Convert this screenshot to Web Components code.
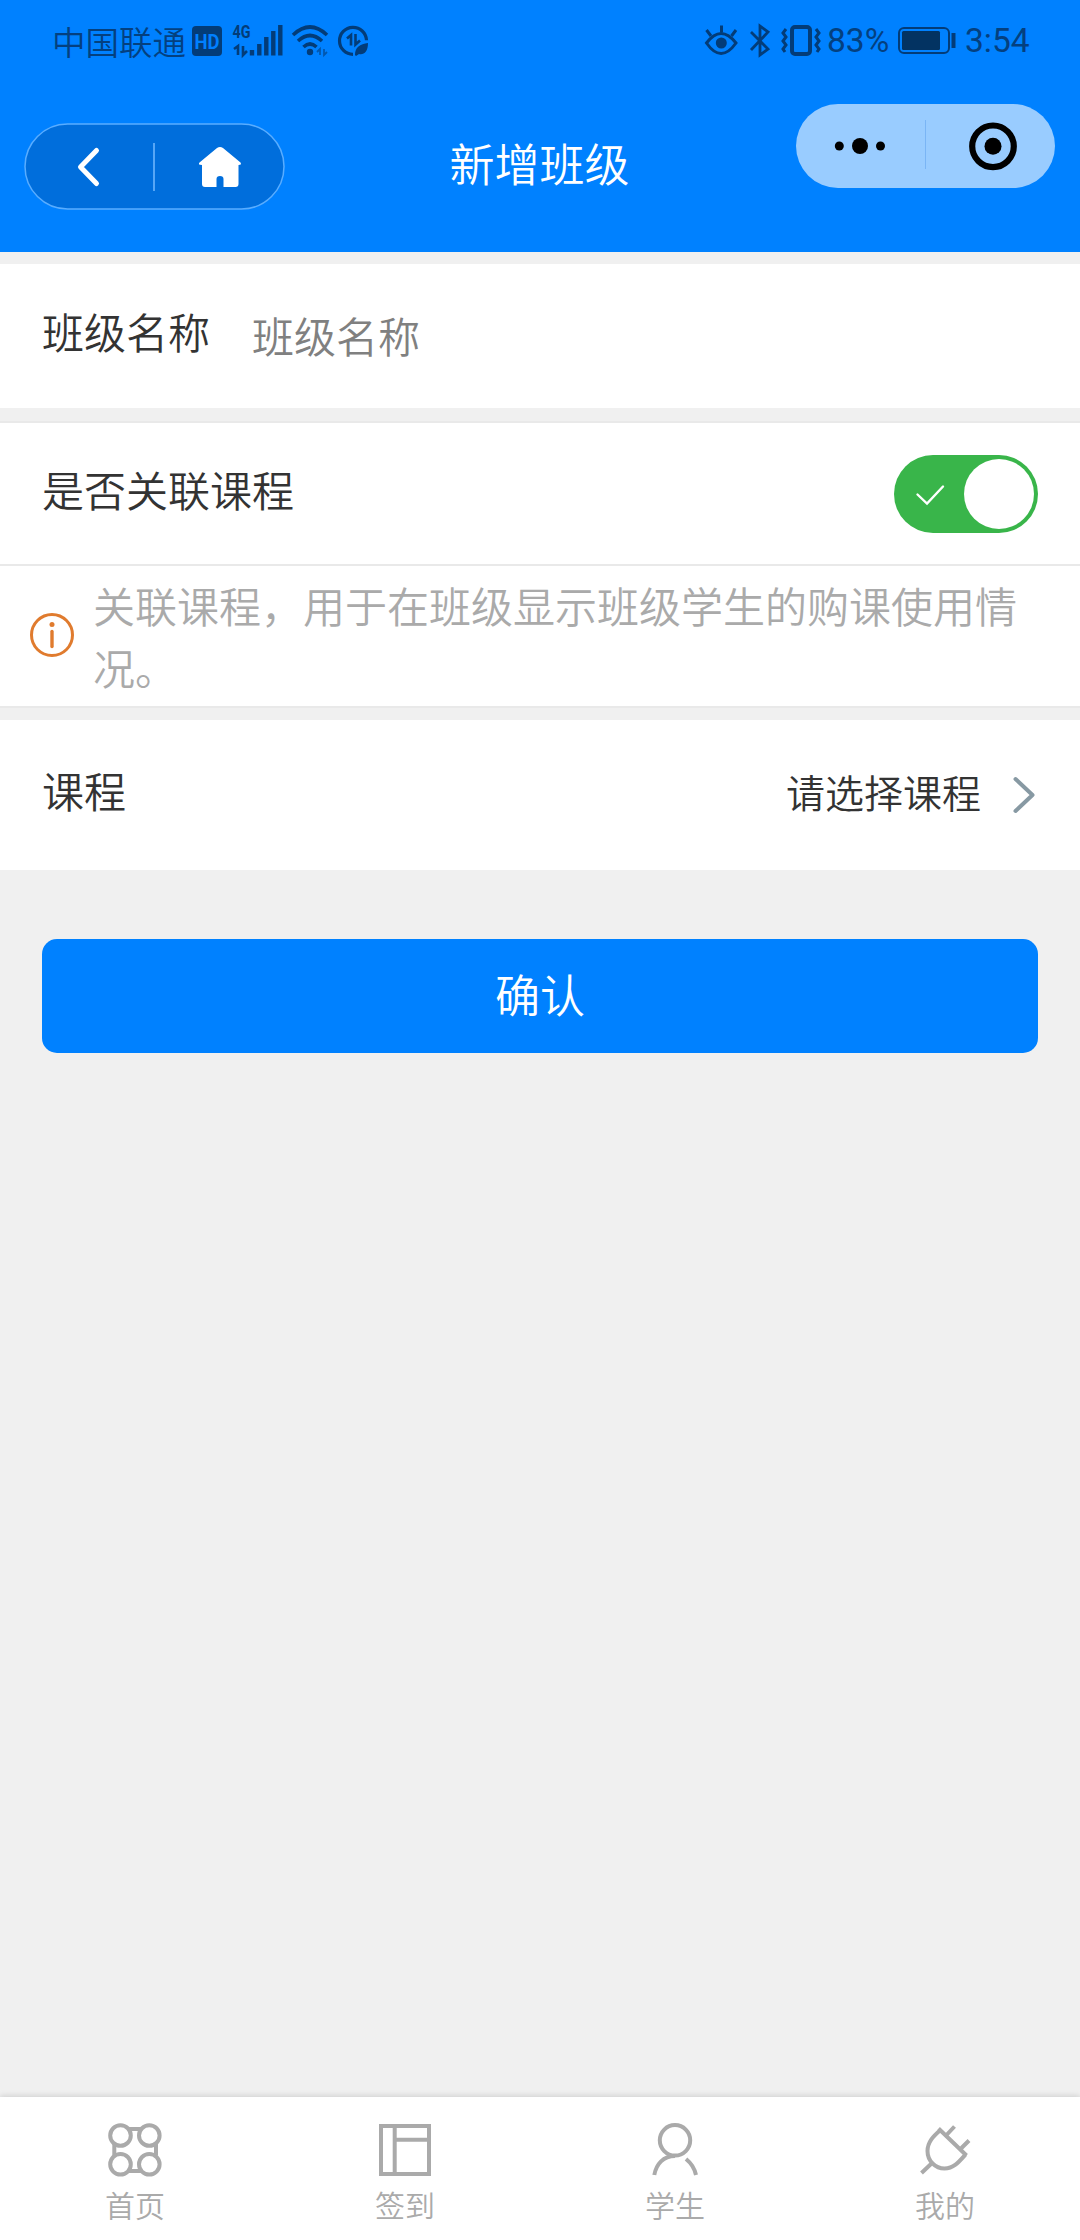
<!DOCTYPE html>
<html lang="zh-CN">
<head>
<meta charset="utf-8">
<title>新增班级</title>
<style>
  html, body {
    margin: 0;
    padding: 0;
  }
  body {
    font-family: "Noto Sans CJK SC", sans-serif;
    font-weight: 350;
    background-color: #f0f0f0;
    color: #333333;
  }
</style>
</head>
<body>
<class-page></class-page>

<script>
const define = (name, html) => {
  const template = document.createElement('template');
  template.innerHTML = html;

  customElements.define(name, class extends HTMLElement {
    constructor() {
      super();

      this.attachShadow({ mode: 'open' });

      this.shadowRoot.appendChild(template.content.cloneNode(true));
    }
  });
};

define('status-bar', `
  <style>
    :host {
      display: flex;
      justify-content: space-between;
      box-sizing: border-box;
      height: 84px;
      padding: 0 50px 0 52px;
      color: #04407f;
    }
    .side {
      display: flex;
      align-items: center;
      height: 80px;
    }
    .carrier {
      font-size: 33.5px;
      line-height: 40px;
      padding-top: 2px;
      margin-right: 6px;
    }
    .digits {
      font-family: Roboto, sans-serif;
      font-size: 33.5px;
      font-weight: 400;
      line-height: 40px;
      padding-top: 2px;
      white-space: nowrap;
    }
    .percent {
      width: 71px;
      margin-left: -1px;
    }
    .time {
      width: 65px;
      margin-left: -1px;
    }
    svg {
      display: block;
      flex: none;
    }
  </style>
  <div class="side">
    <span class="carrier">中国联通</span>
    <!-- x 192..372, y 20..60 -->
    <svg width="180" height="40" viewBox="192 20 180 40" fill="none" stroke="#033c78" font-family="Roboto, sans-serif">
      <rect x="192" y="26" width="30" height="30" rx="4" fill="#033c78" stroke="none"/>
      <text x="194.500" y="48.500" font-size="21" font-weight="700" textLength="25" lengthAdjust="spacingAndGlyphs" fill="#0080ff" stroke="none">HD</text>
      <text x="232.500" y="38" font-size="18" font-weight="700" textLength="18" lengthAdjust="spacingAndGlyphs" fill="#033c78" stroke="none">4G</text>
      <path d="M234 49l4-3v9M243 46v9l4-4" stroke-width="2.600"/>
      <path d="M252 50v5.500M259.300 44v11.500M266.300 37v18.500M273.300 31v24.500M280.300 25v30.500" stroke-width="4.400"/>
      <path d="M293 35q17-16 34 0M298 41q12-11 24 0M303.500 47q6.500-6 13 0" stroke-width="3.600"/>
      <circle cx="310" cy="52" r="3.200" fill="#033c78" stroke="none"/>
      <path d="M317 52l3-3v6M324 49v6l3-3" stroke-width="1.800" opacity=".6"/>
      <path d="M353 54.300a13.500 13.500 0 1 1 13.500-14" stroke-width="3.200"/>
      <path d="M347 38.500l4-3.500v10.500M355.500 34v10.500l4.500-4" stroke-width="2.600"/>
      <path d="M355 55c0-8 5-11 13-12 0 9-4 12-9 11l-3 2z" fill="#033c78" stroke="none"/>
    </svg>
  </div>
  <div class="side">
    <!-- eye, bluetooth, vibrate: x 704..828 -->
    <svg width="124" height="40" viewBox="704 20 124 40" fill="none" stroke="#033c78" stroke-width="3">
      <path d="M706.500 43q14.500-19 29.500 0q-15 21-29.500 0z"/>
      <circle cx="721.300" cy="43" r="5.500" fill="#033c78" stroke="none"/>
      <path d="M721.500 32.500V25.500M711 36l-4.500-6M731.500 36l4.500-6"/>
      <path d="M751 32l17 17-8 6V26l8 6-17 18" stroke-width="2.800"/>
      <rect x="792" y="27" width="18" height="27" rx="3" stroke-width="4"/>
      <path d="M786 29l-3 4 3 4-3 4 3 4-3 4 2 3M816 29l3 4-3 4 3 4-3 4 3 4-2 3"/>
    </svg>
    <span class="digits percent">83%</span>
    <svg width="68" height="40" viewBox="898 20 68 40" fill="none" stroke="#033c78">
      <rect x="899" y="28" width="50" height="25" rx="5" stroke-width="2"/>
      <rect x="902" y="31" width="38" height="19" rx="1.500" fill="#033362" stroke="none"/>
      <path d="M953.500 33v15" stroke-width="4"/>
    </svg>
    <span class="digits time">3:54</span>
  </div>
`);

define('nav-bar', `
  <style>
    :host {
      display: grid;
      grid-template-columns: 1fr auto 1fr;
      align-items: start;
      box-sizing: border-box;
      height: 168px;
      padding: 0 25px 0 24px;
    }
    .back {
      display: block;
      margin-top: 39px;
    }
    .title {
      color: #ffffff;
      font-size: 45px;
      line-height: 60px;
      padding-top: 49px;
    }
    .menu {
      display: block;
      margin-top: 20px;
      justify-self: end;
    }
  </style>
  <svg class="back" width="261" height="88" viewBox="24 123 261 88" fill="none">
    <rect x="25" y="124" width="259" height="85" rx="42.500" fill="#006edc" stroke="#59adff" stroke-width="1.500"/>
    <path d="M96.500 150.500L80.500 167l16 16.500" stroke="#fff" stroke-width="5" stroke-linecap="round" stroke-linejoin="round"/>
    <path d="M154 143v48" stroke="#73baff" stroke-width="1.500"/>
    <path d="M217 148q3-2 6 0l17.500 14.500q1.500 2.500-2 2.500v19q0 3-3 3H223.500v-8q0-3-3.500-3t-3.500 3v8H205q-3 0-3-3V165q-4.500 0-2.500-2.500z" fill="#fff"/>
  </svg>
  <div class="title"><slot></slot></div>
  <svg class="menu" width="259" height="84" viewBox="796 104 259 84">
    <rect x="796" y="104" width="259" height="84" rx="42" fill="#99ccff"/>
    <circle cx="839.300" cy="146" r="4.500"/>
    <circle cx="860" cy="146" r="8"/>
    <circle cx="880.500" cy="146" r="4.500"/>
    <path d="M925.500 120v49" stroke="#7ab5f5" stroke-width="1"/>
    <circle cx="993" cy="146.300" r="20.800" fill="none" stroke="#000" stroke-width="6.200"/>
    <circle cx="993" cy="146.300" r="8.500"/>
  </svg>
`);

define('form-row', `
  <style>
    :host {
      display: flex;
      align-items: center;
      box-sizing: border-box;
      height: 144px;
      padding: 0 42px;
      background-color: #ffffff;
      font-size: 42px;
      line-height: 60px;
    }
    .label {
      padding-right: 42px;
      padding-bottom: 10px;
    }
    .content {
      display: flex;
      align-items: center;
      flex: 1;
    }
    :host([end]) .content {
      justify-content: flex-end;
    }
  </style>
  <div class="label"><slot name="label"></slot></div>
  <div class="content"><slot></slot></div>
`);

define('toggle-switch', `
  <style>
    :host {
      display: flex;
      align-items: center;
      justify-content: space-between;
      box-sizing: border-box;
      width: 144px;
      height: 78px;
      padding: 0 4px 0 21px;
      border-radius: 39px;
      background-color: #39b54a;
    }
    .knob {
      width: 70px;
      height: 70px;
      border-radius: 50%;
      background-color: #ffffff;
    }
    svg { display: block; }
  </style>
  <svg width="32" height="24" viewBox="0 0 32 24" fill="none" stroke="#fff" stroke-width="2.400" stroke-linecap="round">
    <path d="M2.500 12.500l9.500 9 16-17"/>
  </svg>
  <div class="knob"></div>
`);

define('info-tip', `
  <style>
    :host {
      display: flex;
      align-items: center;
      box-sizing: border-box;
      height: 140px;
      padding: 0 30px 0 29px;
      background-color: #ffffff;
      color: #aaaaaa;
      font-size: 42px;
      line-height: 62px;
    }
    svg {
      display: block;
      flex: none;
      margin-right: 18px;
    }
    p {
      margin: 0;
      width: 940px;
    }
  </style>
  <svg width="46" height="46" viewBox="0 0 46 46" fill="none" stroke="#e07b2e">
    <circle cx="23" cy="22" r="20.500" stroke-width="3"/>
    <circle cx="23" cy="11.500" r="2.500" fill="#e07b2e" stroke="none"/>
    <path d="M23 18.500v15" stroke-width="3.400" stroke-linecap="round"/>
  </svg>
  <p><slot></slot></p>
`);

define('course-picker', `
  <style>
    :host {
      display: flex;
      align-items: center;
      font-size: 39px;
    }
    span { padding-bottom: 8px; }
    svg {
      display: block;
      margin: 0 2px 0 31px;
    }
  </style>
  <span><slot></slot></span>
  <svg width="24" height="38" viewBox="0 0 24 38" fill="none" stroke="#8799a3" stroke-width="4" stroke-linecap="round" stroke-linejoin="round">
    <path d="M3.500 3l17 16-17 16"/>
  </svg>
`);

define('submit-button', `
  <style>
    :host {
      display: block;
      margin: 69px 42px 0;
    }
    button {
      display: block;
      width: 100%;
      height: 114px;
      padding: 0 0 5px;
      border: 0;
      border-radius: 15px;
      background-color: #0081ff;
      color: #ffffff;
      font-family: inherit;
      font-size: 45px;
      font-weight: inherit;
      line-height: 60px;
    }
  </style>
  <button><slot></slot></button>
`);

define('tab-item', `
  <style>
    :host {
      display: flex;
      flex: 1;
      flex-direction: column;
      align-items: center;
      color: #aaaaaa;
      font-size: 30px;
      line-height: 40px;
    }
    .icon { height: 60px; }
    .text { padding-top: 4px; }
  </style>
  <div class="icon"><slot name="icon"></slot></div>
  <div class="text"><slot></slot></div>
`);

define('tab-bar', `
  <style>
    :host {
      display: flex;
      box-sizing: border-box;
      height: 143px;
      padding-top: 23px;
      background-color: #ffffff;
      box-shadow: 0 -1px 6px rgba(0, 0, 0, 0.15);
    }
    svg {
      display: block;
      fill: none;
      stroke: #aaaaaa;
      stroke-width: 4;
    }
  </style>
  <tab-item>
    <svg slot="icon" width="60" height="60" viewBox="105 2120 60 60">
      <circle cx="120.500" cy="2135.500" r="10.300"/>
      <circle cx="149.300" cy="2135.500" r="10.300"/>
      <circle cx="120.500" cy="2164.300" r="10.300"/>
      <circle cx="149.300" cy="2164.300" r="10.300"/>
      <path d="M129 2129h12M129 2171h12M114.300 2143.500v12M156 2143.500v12"/>
    </svg>
    首页
  </tab-item>
  <tab-item>
    <svg slot="icon" width="60" height="60" viewBox="375 2120 60 60">
      <path d="M381 2126h48v48h-48zM394.700 2126v48M394.700 2139.700H429"/>
    </svg>
    签到
  </tab-item>
  <tab-item>
    <svg slot="icon" width="60" height="60" viewBox="645 2120 60 60">
      <circle cx="675" cy="2140.300" r="15.200"/>
      <path d="M654.300 2175c2-11 9-19 20.700-19M686 2159c5 4 8.500 9 10 16"/>
    </svg>
    学生
  </tab-item>
  <tab-item>
    <svg slot="icon" width="60" height="60" viewBox="915 2120 60 60">
      <path d="M938.500 2128.500l28 27M940.500 2130c-7 6-13 12-13 21 0 10 8 17.500 17 17.500s14-6 21-14M946.500 2135l8-8.500M960.500 2149l8.500-8.500M931.500 2163.500l-10 9.500"/>
    </svg>
    我的
  </tab-item>
`);

define('class-page', `
  <style>
    :host {
      display: flex;
      flex-direction: column;
      width: 1080px;
      height: 2240px;
      overflow: hidden;
      background-color: #f0f0f0;
    }
    header {
      background-color: #0081ff;
    }
    main {
      flex: 1;
      padding-top: 12px;
    }
    .group {
      margin: 13px 0 12px;
      border-top: 2px solid #e9e9e9;
      border-bottom: 2px solid #e9e9e9;
    }
    .linked {
      height: 143px;
      border-bottom: 2px solid #e9e9e9;
    }
    .course {
      height: 150px;
    }
    .placeholder {
      color: #808080;
      padding-bottom: 3px;
    }
  </style>
  <header>
    <status-bar></status-bar>
    <nav-bar>新增班级</nav-bar>
  </header>
  <main>
    <form-row>
      <span slot="label">班级名称</span>
      <span class="placeholder">班级名称</span>
    </form-row>
    <div class="group">
      <form-row class="linked" end>
        <span slot="label">是否关联课程</span>
        <toggle-switch></toggle-switch>
      </form-row>
      <info-tip>关联课程，用于在班级显示班级学生的购课使用情况。</info-tip>
    </div>
    <form-row class="course" end>
      <span slot="label">课程</span>
      <course-picker>请选择课程</course-picker>
    </form-row>
    <submit-button>确认</submit-button>
  </main>
  <tab-bar></tab-bar>
`);
</script>
</body>
</html>
